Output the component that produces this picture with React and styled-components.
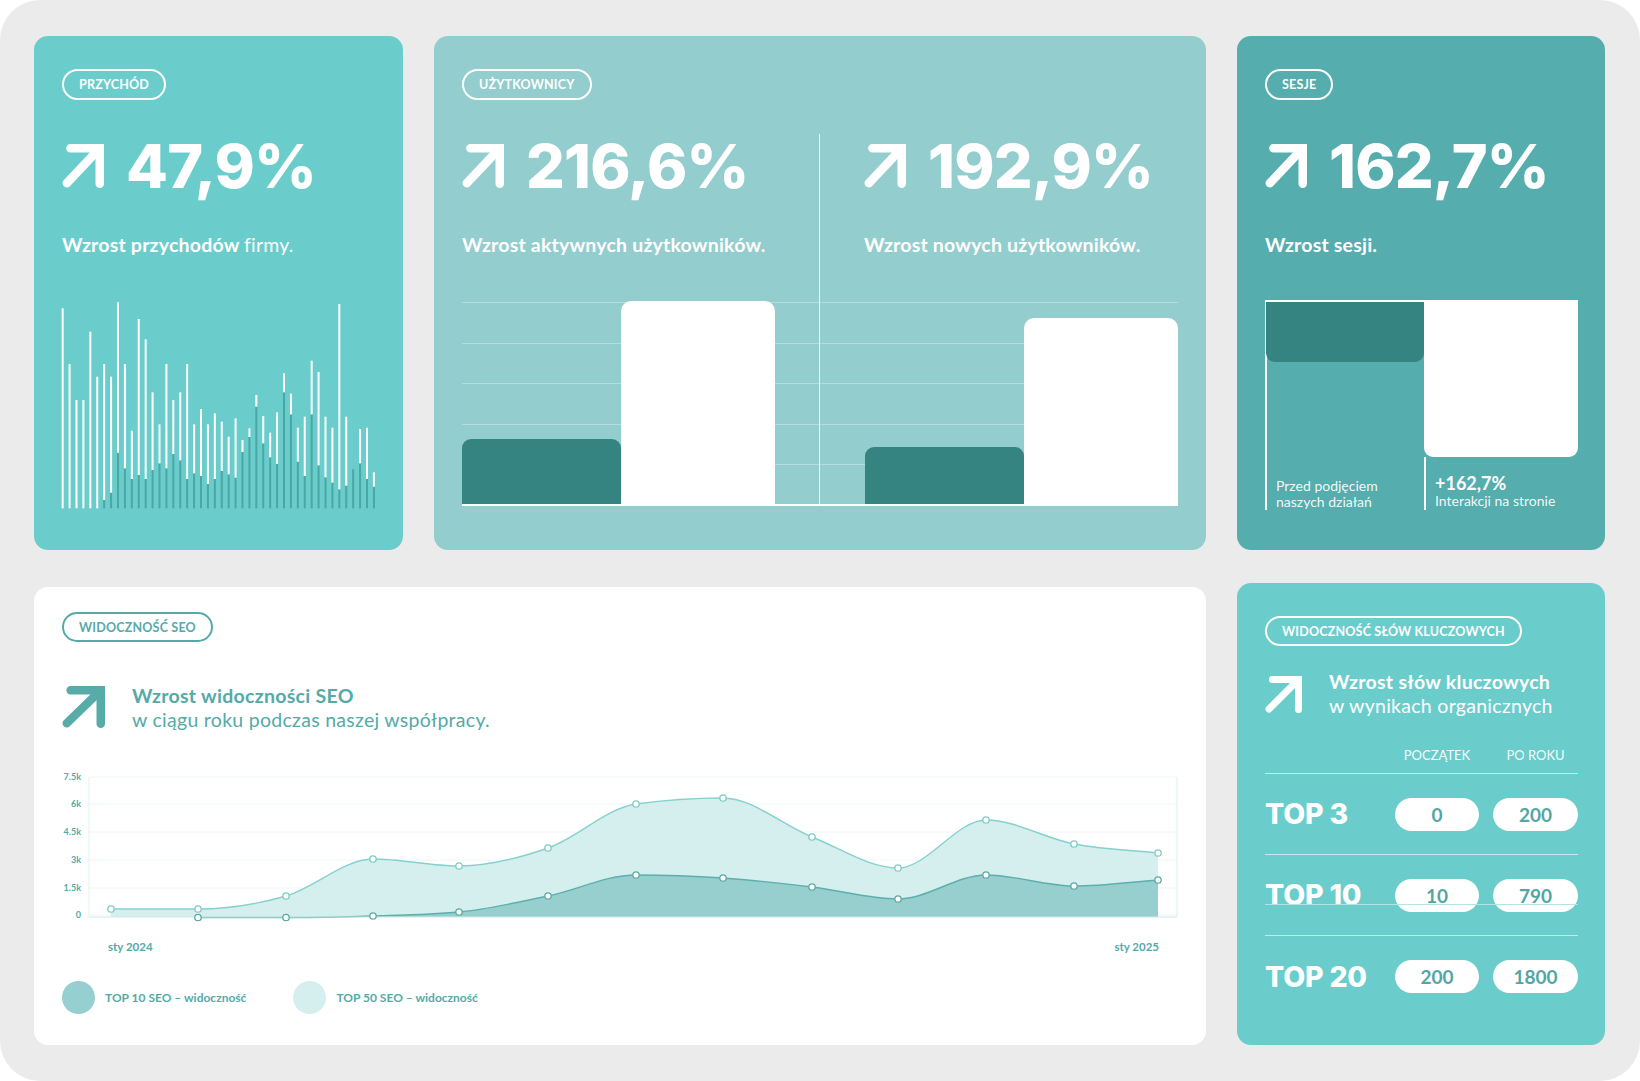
import React from "react";
import styled, { createGlobalStyle, css } from "styled-components";

// --- PALETA ---
const TEAL = "#6bcdcb";
const TEAL_SOFT = "#94cdcd";
const TEAL_MID = "#55adad";
const TEAL_DARK = "#358482";
const TEAL_TEXT = "#55aaa8";
const HEAVY = `Inter, "Noto Sans", sans-serif`;

// --- DANE ---
// słupki przychodu: [góra białej kreski, początek ciemnej] w jednostkach wykresu
const REVENUE = [
  [85, 685], [252, 685], [360, 685], [360, 685], [155, 685], [290, 685],
  [252, 660], [290, 638], [67, 518], [252, 565], [452, 597], [117, 585],
  [178, 597], [337, 570], [433, 550], [252, 565], [360, 522], [337, 541],
  [252, 597], [433, 580], [387, 588], [433, 612], [400, 597], [425, 573],
  [470, 583], [415, 593], [480, 516], [445, 471], [345, 380], [408, 490],
  [458, 532], [397, 552], [280, 337], [341, 403], [443, 545], [410, 588],
  [242, 403], [276, 556], [410, 592], [443, 608], [72, 628], [410, 617],
  [568, 568], [447, 550], [443, 597], [577, 620],
];

const SEO_X = [49, 136, 224, 311, 397, 486, 574, 661, 750, 836, 924, 1012, 1096];
const TOP50 = [139, 139, 126, 89, 96, 78, 34, 28, 67, 98, 50, 74, 83];
const TOP10 = [null, 147.5, 147.5, 146, 142, 126, 105, 108, 117, 129, 105, 116, 110];
const Y_TICKS = [
  [7, "7.5k"], [34, "6k"], [62, "4.5k"], [90, "3k"], [118, "1.5k"], [145, "0"],
];
const BASE = 147;

const KEYWORDS = [
  { label: "TOP 3", start: "0", year: "200" },
  { label: "TOP 10", start: "10", year: "790", struck: true },
  { label: "TOP 20", start: "200", year: "1800" },
];

// krzywa monotoniczna jak w d3 (curveMonotoneX)
function smoothPath(pts) {
  const n = pts.length;
  const s = [];
  const t = [];
  for (let i = 0; i < n - 1; i++) {
    s[i] = (pts[i + 1][1] - pts[i][1]) / (pts[i + 1][0] - pts[i][0]);
  }
  for (let i = 1; i < n - 1; i++) {
    const h0 = pts[i][0] - pts[i - 1][0];
    const h1 = pts[i + 1][0] - pts[i][0];
    const p = (s[i - 1] * h1 + s[i] * h0) / (h0 + h1);
    t[i] =
      (Math.sign(s[i - 1]) + Math.sign(s[i])) *
        Math.min(Math.abs(s[i - 1]), Math.abs(s[i]), 0.5 * Math.abs(p)) || 0;
  }
  t[0] = s[0];
  t[n - 1] = s[n - 2];
  let d = `M${pts[0][0]},${pts[0][1]}`;
  for (let i = 0; i < n - 1; i++) {
    const [x0, y0] = pts[i];
    const [x1, y1] = pts[i + 1];
    const dx = (x1 - x0) / 3;
    d += ` C${x0 + dx},${y0 + dx * t[i]} ${x1 - dx},${y1 - dx * t[i + 1]} ${x1},${y1}`;
  }
  return d;
}

// --- ESTILOS ---
const GlobalStyle = createGlobalStyle`
  html, body {
    margin: 0;
    padding: 0;
    background: #ffffff;
  }
  body {
    font-family: Lato, "Noto Sans", sans-serif;
    -webkit-font-smoothing: antialiased;
  }
  * {
    box-sizing: border-box;
  }
`;

const Board = styled.main`
  width: 1640px;
  height: 1081px;
  background: #ebebeb;
  border-radius: 40px;
  padding: 36px 35px 36px 34px;
  display: grid;
  grid-template-columns: 369px 772px 368px;
  grid-template-rows: 514px 462px;
  column-gap: 31px;
  row-gap: 33px;
`;

const Card = styled.section`
  position: relative;
  display: flex;
  flex-direction: column;
  background: ${(p) => p.$bg};
  color: #ffffff;
  border-radius: 14px;
  padding: ${(p) => p.$pad || "33px 28px"};
  grid-column: ${(p) => p.$span || "auto"};
  margin-top: ${(p) => p.$offset || 0}px;
  overflow: hidden;

  & > * {
    flex-shrink: 0;
  }
`;

const Pill = styled.span`
  align-self: flex-start;
  display: inline-flex;
  align-items: center;
  height: ${(p) => p.$h || 31}px;
  padding: 0 15px;
  border: 2px solid ${(p) => p.$color || "#ffffff"};
  border-radius: 16px;
  color: ${(p) => p.$color || "#ffffff"};
  font-size: 12.5px;
  font-weight: 700;
  letter-spacing: 0.2px;
  text-transform: uppercase;
`;

const Stat = styled.div`
  display: flex;
  align-items: center;
  gap: 22px;
  margin-top: ${(p) => (p.$flush ? 0 : 34)}px;
  padding-left: ${(p) => p.$inset || 0}px;
`;

const StatValue = styled.span`
  font-family: ${HEAVY};
  font-size: 61px;
  line-height: 64px;
  font-weight: 800;
  letter-spacing: -0.8px;
`;

const Lead = styled.p`
  margin: 35px 0 0;
  padding-left: ${(p) => p.$inset || 0}px;
  font-size: 19.5px;
  line-height: 24px;
  font-weight: 700;
  letter-spacing: 0.2px;

  span {
    font-weight: 400;
  }
`;

const ArrowSvg = styled.svg`
  flex: none;
  display: block;
  margin-top: ${(p) => p.$top || 0}px;
`;

const RevenueSvg = styled.svg`
  display: block;
  margin: 41px 0 0 -4px;
`;

const Split = styled.div`
  display: grid;
  grid-template-columns: 357px 359px;
  margin-top: 34px;
`;

const Half = styled.div`
  display: flex;
  flex-direction: column;
  ${(p) =>
    p.$divided &&
    css`
      border-left: 1px solid rgba(255, 255, 255, 0.9);
    `}
`;

const Bars = styled.div`
  margin-top: 45px;
  height: 204px;
  display: flex;
  align-items: flex-end;
  padding: ${(p) => (p.$right ? "0 0 0 45px" : "0 44px 0 0")};
  border-bottom: 2px solid #ffffff;
  background-image: repeating-linear-gradient(
    to bottom,
    rgba(255, 255, 255, 0.32) 0 1px,
    transparent 1px 40.6px
  );
`;

const Bar = styled.div`
  height: ${(p) => p.$h}px;
  width: ${(p) => (p.$dark ? 159 : 154)}px;
  background: ${(p) => (p.$dark ? TEAL_DARK : "#ffffff")};
  border-radius: ${(p) => (p.$dark ? "9px 9px 0 0" : "10px 10px 0 0")};
`;

const Sessions = styled.div`
  margin-top: 43px;
  height: 210px;
  display: grid;
  grid-template-columns: 159px 154px;
  border-top: 2px solid #ffffff;
`;

const SessionCol = styled.div`
  display: flex;
  flex-direction: column;
  justify-content: space-between;
  ${(p) =>
    p.$lined &&
    css`
      border-left: 2px solid #ffffff;
    `}
`;

const HangBar = styled.div`
  height: ${(p) => p.$h}px;
  background: ${(p) => (p.$dark ? TEAL_DARK : "#ffffff")};
  border-radius: 0 0 9px 9px;
  margin-left: ${(p) => (p.$dark ? -1 : 0)}px;
`;

const Caption = styled.div`
  padding: 0 0 0 9px;
  font-size: 14px;
  line-height: 16px;
  color: rgba(255, 255, 255, 0.93);
`;

const Gain = styled.div`
  flex: 1;
  border-left: 2px solid #ffffff;
  padding: 16px 0 0 9px;
  font-size: 14px;
  line-height: 16px;
  color: rgba(255, 255, 255, 0.93);

  strong {
    display: block;
    font-size: 18px;
    line-height: 20px;
    font-weight: 700;
    color: #ffffff;
  }
`;

const Heading = styled.div`
  display: flex;
  align-items: flex-start;
  gap: ${(p) => p.$gap || 27}px;
  margin-top: ${(p) => p.$top}px;
  color: ${(p) => p.$color || "#ffffff"};
  font-size: 19.5px;
  line-height: 24px;
  letter-spacing: 0.28px;

  b {
    display: block;
    font-weight: 700;
  }
  span {
    display: block;
    font-weight: 400;
  }
`;

const ChartSvg = styled.svg`
  display: block;
  margin-top: 38px;
  overflow: visible;
`;

const Legend = styled.div`
  display: flex;
  gap: 47px;
  margin-top: 21px;
`;

const LegendItem = styled.div`
  display: flex;
  align-items: center;
  gap: 10px;
  color: ${TEAL_TEXT};
  font-size: 12px;
  font-weight: 700;
`;

const Dot = styled.span`
  width: 33px;
  height: 33px;
  border-radius: 50%;
  background: ${(p) => p.$color};
`;

const Table = styled.div`
  margin-top: 29px;
`;

const grid = css`
  display: grid;
  grid-template-columns: 116px 84px 85px;
  column-gap: 14px;
`;

const HeadRow = styled.div`
  ${grid}
  padding-bottom: 10px;
  border-bottom: 1px solid rgba(255, 255, 255, 0.6);
  font-size: 13px;
  line-height: 16px;
  text-align: center;
  color: rgba(255, 255, 255, 0.95);
`;

const Row = styled.div`
  ${grid}
  position: relative;
  align-items: center;
  height: 81px;
  border-bottom: ${(p) => (p.$last ? "none" : "1px solid rgba(255, 255, 255, 0.6)")};

  ${(p) =>
    p.$struck &&
    css`
      &::after {
        content: "";
        position: absolute;
        left: 0;
        right: 0;
        top: 49px;
        height: 1px;
        background: #b3e4e2;
      }
    `}
`;

const RowLabel = styled.span`
  font-family: ${HEAVY};
  font-size: 28.5px;
  line-height: 28px;
  font-weight: 800;
  letter-spacing: -0.2px;
  white-space: nowrap;
`;

const Value = styled.span`
  height: 33px;
  border-radius: 17px;
  background: #ffffff;
  color: #52a6a4;
  display: flex;
  align-items: center;
  justify-content: center;
  font-size: 19px;
  font-weight: 700;
`;

// --- COMPONENTES ---
function Arrow({ w = 40, h = 40, weight = 8, color = "#ffffff", top }) {
  const pad = weight / 2;
  return (
    <ArrowSvg width={w} height={h} viewBox={`0 0 ${w} ${h}`} $top={top}>
      <path
        d={`M${w * 0.2} ${pad} H${w - pad} V${h - pad}`}
        fill="none"
        stroke={color}
        strokeWidth={weight}
        strokeLinecap="round"
        strokeLinejoin="miter"
      />
      <path
        d={`M${w - pad} ${pad} L${pad + 0.5} ${h - pad - 0.5}`}
        stroke={color}
        strokeWidth={weight}
        strokeLinecap="round"
      />
    </ArrowSvg>
  );
}

function BigStat({ value, inset, flush }) {
  return (
    <Stat $inset={inset} $flush={flush}>
      <Arrow w={42} h={44} weight={8.5} />
      <StatValue>{value}</StatValue>
    </Stat>
  );
}

function RevenueChart() {
  return (
    <RevenueSvg width="322" height="212" viewBox="174 54 966 636">
      {REVENUE.map(([top, mid], i) => {
        const x = 188 + i * 20.75;
        return (
          <g key={i}>
            {mid < 685 && (
              <line x1={x} x2={x} y1={mid} y2={685} stroke="#49a7a4" strokeWidth="6" />
            )}
            {mid > top && (
              <line x1={x} x2={x} y1={top} y2={mid} stroke="#ffffff" strokeWidth="6" />
            )}
          </g>
        );
      })}
    </RevenueSvg>
  );
}

function SeoChart() {
  const light = SEO_X.map((x, i) => [x, TOP50[i]]);
  const dark = SEO_X.map((x, i) => [x, TOP10[i]]).filter((p) => p[1] !== null);
  const lightLine = smoothPath(light);
  const darkLine = smoothPath(dark);
  const area = (line, pts) =>
    `${line} L${pts[pts.length - 1][0]},${BASE} L${pts[0][0]},${BASE} Z`;

  return (
    <ChartSvg width="1116" height="190" viewBox="0 0 1116 190">
      {Y_TICKS.map(([y, label]) => (
        <g key={label}>
          <line x1="27" x2="1115" y1={y} y2={y} stroke="#eef6f6" strokeWidth="1" />
          <text
            x="19"
            y={y + 3}
            textAnchor="end"
            fontSize="9"
            fontWeight="700"
            fill={TEAL_TEXT}
          >
            {label}
          </text>
        </g>
      ))}
      <line x1="27" x2="27" y1="7" y2={BASE} stroke="#e3f1f1" strokeWidth="1" />
      <line x1="1115" x2="1115" y1="7" y2={BASE} stroke="#d9eeee" strokeWidth="1" />

      <path d={area(lightLine, light)} fill="#d4efee" />
      <path d={lightLine} fill="none" stroke="#85d1ce" strokeWidth="1.4" />
      <path d={area(darkLine, dark)} fill="#97cfce" />
      <path d={darkLine} fill="none" stroke="#5dafac" strokeWidth="1.4" />
      <line x1="27" x2="1115" y1={BASE} y2={BASE} stroke="#cfe9e9" strokeWidth="1" />

      {light.map(([x, y]) => (
        <circle key={`l${x}`} cx={x} cy={y} r="3.2" fill="#ffffff" stroke="#7fcbc8" strokeWidth="1.3" />
      ))}
      {dark.map(([x, y]) => (
        <circle key={`d${x}`} cx={x} cy={y} r="3.2" fill="#ffffff" stroke="#5aa9a6" strokeWidth="1.3" />
      ))}

      <text x="46" y="181" fontSize="11.5" fontWeight="700" fill={TEAL_TEXT}>
        sty 2024
      </text>
      <text x="1097" y="181" textAnchor="end" fontSize="11.5" fontWeight="700" fill={TEAL_TEXT}>
        sty 2025
      </text>
    </ChartSvg>
  );
}

export default function App() {
  return (
    <>
      <GlobalStyle />
      <Board>
        {/* Przychód */}
        <Card $bg={TEAL}>
          <Pill>Przychód</Pill>
          <BigStat value="47,9%" />
          <Lead>
            Wzrost przychodów <span>firmy.</span>
          </Lead>
          <RevenueChart />
        </Card>

        {/* Użytkownicy */}
        <Card $bg={TEAL_SOFT}>
          <Pill>Użytkownicy</Pill>
          <Split>
            <Half>
              <BigStat value="216,6%" flush />
              <Lead>Wzrost aktywnych użytkowników.</Lead>
              <Bars>
                <Bar $dark $h={65} />
                <Bar $h={203} />
              </Bars>
            </Half>
            <Half $divided>
              <BigStat value="192,9%" inset={44} flush />
              <Lead $inset={44}>Wzrost nowych użytkowników.</Lead>
              <Bars $right>
                <Bar $dark $h={57} />
                <Bar $h={186} />
              </Bars>
            </Half>
          </Split>
        </Card>

        {/* Sesje */}
        <Card $bg={TEAL_MID} $pad="33px 27px 33px 28px">
          <Pill>Sesje</Pill>
          <BigStat value="162,7%" />
          <Lead>Wzrost sesji.</Lead>
          <Sessions>
            <SessionCol $lined>
              <HangBar $dark $h={60} />
              <Caption>
                Przed podjęciem
                <br />
                naszych działań
              </Caption>
            </SessionCol>
            <SessionCol>
              <HangBar $h={155} />
              <Gain>
                <strong>+162,7%</strong>
                Interakcji na stronie
              </Gain>
            </SessionCol>
          </Sessions>
        </Card>

        {/* Widoczność SEO */}
        <Card $bg="#ffffff" $span="1 / span 2" $offset={4} $pad="25px 28px">
          <Pill $color={TEAL_TEXT} $h={30}>
            Widoczność SEO
          </Pill>
          <Heading $top={42} $color={TEAL_TEXT}>
            <Arrow w={43} h={42} weight={8.5} color="#57acaa" top={2} />
            <div>
              <b>Wzrost widoczności SEO</b>
              <span>w ciągu roku podczas naszej współpracy.</span>
            </div>
          </Heading>
          <SeoChart />
          <Legend>
            <LegendItem>
              <Dot $color="#95cfcf" />
              TOP 10 SEO – widoczność
            </LegendItem>
            <LegendItem>
              <Dot $color="#d5efee" />
              TOP 50 SEO – widoczność
            </LegendItem>
          </Legend>
        </Card>

        {/* Widoczność słów kluczowych */}
        <Card $bg={TEAL} $pad="33px 27px 33px 28px">
          <Pill $h={30}>Widoczność słów kluczowych</Pill>
          <Heading $top={24}>
            <Arrow w={37} h={37} weight={7} top={6} />
            <div>
              <b>Wzrost słów kluczowych</b>
              <span>w wynikach organicznych</span>
            </div>
          </Heading>
          <Table>
            <HeadRow>
              <span />
              <span>POCZĄTEK</span>
              <span>PO ROKU</span>
            </HeadRow>
            {KEYWORDS.map((k, i) => (
              <Row key={k.label} $last={i === KEYWORDS.length - 1} $struck={k.struck}>
                <RowLabel>{k.label}</RowLabel>
                <Value>{k.start}</Value>
                <Value>{k.year}</Value>
              </Row>
            ))}
          </Table>
        </Card>
      </Board>
    </>
  );
}
